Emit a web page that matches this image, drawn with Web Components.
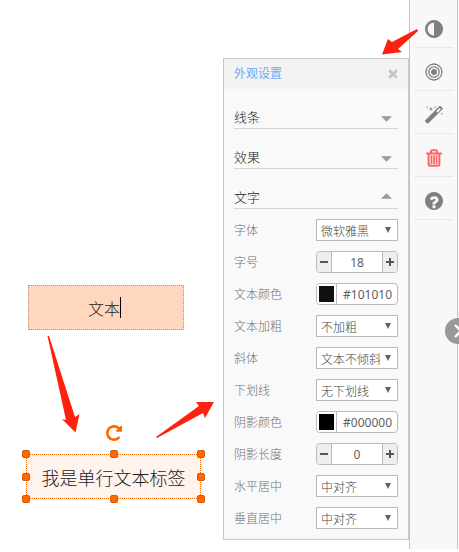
<!DOCTYPE html>
<html lang="zh-CN">
<head>
<meta charset="utf-8">
<meta name="viewport" content="width=device-width, initial-scale=1">
<title>外观设置</title>
<style>
  html, body { margin: 0; min-height: 100vh; background: #fff; }
  body { font-family: "Noto Sans", "Noto Sans CJK SC", sans-serif; font-size: 12px; font-weight: 300; overflow: hidden; }
</style>
</head>
<body>
<editor-app></editor-app>
<script>
const define = (name, html, setup) => customElements.define(name, class extends HTMLElement {
  connectedCallback() {
    if (this.shadowRoot) return;
    this.attachShadow({ mode: 'open' }).innerHTML = html;
    if (setup) setup(this, this.shadowRoot);
  }
});

const ICONS = {
  adjust: '<svg viewBox="0 0 1536 1536"><path d="M768 1312V224q-148 0-273 73T297 495t-73 273 73 273 198 198 273 73zm768-544q0 209-103 385.500T1153.500 1433 768 1536t-385.500-103T103 1153.500 0 768t103-385.500T382.500 103 768 0t385.500 103T1433 382.500 1536 768z"/></svg>',
  target: '<svg viewBox="0 0 18 18"><g fill="none" stroke="currentColor" stroke-width="1.3"><circle cx="9" cy="9" r="8"/><circle cx="9" cy="9" r="5.200"/></g><circle cx="9" cy="9" r="3"/></svg>',
  magic: '<svg viewBox="0 1 18 18"><path fill-rule="evenodd" d="M.3 15.300 14.200 1.300q.8-.8 1.600 0l1.500 1.500q.8.8 0 1.600L3.400 18.200q-.7.700-1.400 0L.3 16.700q-.7-.7 0-1.400zM11.300 6.200l1.400 1.400 3.200-3.300-1.400-1.400z"/><path d="M6 1.500 6.600 3.400 8.500 4 6.600 4.600 6 6.500 5.400 4.600 3.500 4 5.400 3.400zM2.200.8l.3 1 .9.300-.9.300-.3 1-.3-1-.9-.3.900-.3zM10 .8l.3 1 .9.300-.9.300-.3 1-.3-1-.9-.3.900-.3zM16.800 7.500l.3 1 .9.300-.9.300-.3 1-.3-1-.9-.3.900-.3z"/></svg>',
  trash: '<svg viewBox="0 0 18 18"><g fill="none" stroke="currentColor" stroke-width="2"><path d="M1.200 4.400h15.600M3.600 4.600v10.900q0 1.300 1.300 1.300h8.200q1.300 0 1.300-1.300V4.600M6 4.200V2.400q0-1.100 1.200-1.100h3.600q1.200 0 1.200 1.100v1.800"/><path stroke-width="1.700" d="M6.500 6.300v9M9 6.300v9M11.500 6.300v9"/></g></svg>',
  help: '<svg viewBox="0 0 1536 1536"><path d="M896 1344v-192q0-14-9-23t-23-9H672q-14 0-23 9t-9 23v192q0 14 9 23t23 9h192q14 0 23-9t9-23zm256-672q0-88-55.500-163T958 393t-170-41q-243 0-371 213-15 24 8 42l132 100q7 6 19 6 16 0 25-12 53-68 86-92 34-24 86-24 48 0 85.500 26t37.500 59q0 38-20 61t-68 45q-63 28-115.500 86.500T640 988v36q0 14 9 23t23 9h192q14 0 23-9t9-23q0-19 21.500-49.500T972 925q32-18 49-28.500t46-35 44.500-48 28-60.500 12.500-81zm384 96q0 209-103 385.500T1153.500 1433 768 1536t-385.500-103T103 1153.500 0 768t103-385.500T382.500 103 768 0t385.500 103T1433 382.500 1536 768z"/></svg>',
  repeat: '<svg viewBox="128 128 1536 1536"><path d="M1664 256v448q0 26-19 45t-45 19h-448q-42 0-59-40-17-39 14-69l138-138Q1097 384 896 384q-104 0-198.500 40.500T534 534 424.500 697.500 384 896t40.500 198.500T534 1258t163.500 109.500T896 1408q119 0 225-52t179-147q7-10 23-12 15 0 25 9l137 138q9 8 9.500 20.500t-7.500 22.500q-109 132-264 204.500T896 1664q-156 0-298-61t-245-164-164-245-61-298 61-298 164-245 245-164 298-61q147 0 284.500 55.500T1425 340l130-129q29-31 70-14 39 17 39 59z"/></svg>',
  close: '<svg viewBox="0 0 10 10"><path fill="none" stroke="currentColor" stroke-width="2.800" d="M1.200 1.200l7.600 7.600M8.800 1.200 1.200 8.800"/></svg>',
  minus: '<svg viewBox="0 0 8 8"><path d="M0 3h8v2H0z"/></svg>',
  plus: '<svg viewBox="0 0 8 8"><path d="M0 3h3V0h2v3h3v2H5v3H3V5H0z"/></svg>',
  down: '<svg viewBox="0 0 12 6"><path d="M0 0h12L6 6z"/></svg>',
  up: '<svg viewBox="0 0 12 6"><path d="M0 6h12L6 0z"/></svg>',
  caret: '<svg viewBox="0 0 6 6"><path d="M0 0h6L3 6z"/></svg>',
  chevron: '<svg viewBox="0 0 14 14"><path fill="none" stroke="currentColor" stroke-width="2.400" d="M4 1l6 6-6 6"/></svg>'
};

define('ui-icon', `<style>
  :host { display: block; flex: none; width: 18px; height: 18px; }
  svg { display: block; width: 100%; height: 100%; fill: currentColor; }
</style>`, (el, root) => root.innerHTML += ICONS[el.getAttribute('name')]);

define('tool-button', `<style>
  :host { display: block; border-bottom: 1px solid #e8e8e8; color: #808080; }
  :host([danger]) { color: #ff6464; }
  button { display: flex; width: 100%; height: 42px; padding: 6px 0 0; border: 0; background: none; color: inherit; align-items: center; justify-content: center; }
</style><button><ui-icon></ui-icon></button>`, (el, root) => {
  const icon = document.createElement('ui-icon');
  icon.setAttribute('name', el.getAttribute('icon'));
  root.querySelector('ui-icon').replaceWith(icon);
  root.querySelector('button').setAttribute('aria-label', el.getAttribute('label'));
});

define('tool-rail', `<style>
  :host { display: block; box-sizing: border-box; width: 49px; padding: 5px 4px; border: solid #c4c4c4; border-width: 0 1px; background: #f8f8f8; }
</style><slot></slot>`);

define('panel-section', `<style>
  :host { display: block; border-bottom: 1px solid #d4d4d4; color: #222; font-size: 13px; line-height: 20px; }
  button { display: flex; width: 100%; padding: 18px 6px 1px 0; border: 0; background: none; color: inherit; font: inherit; text-align: left; align-items: center; justify-content: space-between; }
  ui-icon { width: 11px; height: 6px; margin-top: 4px; color: #999; }
  :host([open]) ui-icon { margin-top: 0; margin-bottom: 2px; }
</style><button><slot></slot></button>`, (el, root) => {
  const icon = document.createElement('ui-icon');
  icon.setAttribute('name', el.hasAttribute('open') ? 'up' : 'down');
  root.querySelector('button').append(icon);
});

const FIELD = `
  :host { display: flex; height: 22px; align-items: center; color: #707070; }
  label { flex: 1; padding-top: 2px; line-height: 20px; }
  .box { display: flex; box-sizing: border-box; position: relative; flex: none; width: 82px; height: 22px; border: 1px solid #bbb; background: #fff; color: #606060; align-items: stretch; }
  .round { border-radius: 4px; overflow: hidden; }
  input, select { box-sizing: border-box; min-width: 0; border: 0; margin: 0; padding: 0; background: none; color: inherit; font: inherit; outline: 0; }`;

define('select-field', `<style>${FIELD}
  select { appearance: none; width: 100%; padding: 2px 17px 0 4px; color: #444; text-overflow: clip; }
  ui-icon { position: absolute; right: 6px; top: 7px; width: 6px; height: 6px; pointer-events: none; }
</style><label for="f"></label><div class="box"><select id="f"><option></option></select><ui-icon name="caret"></ui-icon></div>`, (el, root) => {
  root.querySelector('label').textContent = el.getAttribute('label');
  root.querySelector('option').textContent = el.getAttribute('value');
});

define('number-field', `<style>${FIELD}
  input { flex: 1; border: solid #bbb; border-width: 0 1px; text-align: center; font-weight: 400; }
  button { display: flex; width: 14px; padding: 0; border: 0; background: #eee; color: #555; align-items: center; justify-content: center; }
  ui-icon { width: 8px; height: 8px; }
</style><label for="f"></label><div class="box round"><button aria-label="减小"><ui-icon name="minus"></ui-icon></button><input id="f" inputmode="numeric"><button aria-label="增大"><ui-icon name="plus"></ui-icon></button></div>`, (el, root) => {
  root.querySelector('label').textContent = el.getAttribute('label');
  root.querySelector('input').value = el.getAttribute('value');
});

define('color-field', `<style>${FIELD}
  button { width: 20px; flex: none; padding: 2px; border: 0; border-right: 1px solid #bbb; background: #fff; }
  i { display: block; height: 16px; }
  input { flex: 1; padding-right: 5px; text-align: right; font-weight: 400; }
</style><label for="f"></label><div class="box round"><button aria-label="选择颜色"><i></i></button><input id="f"></div>`, (el, root) => {
  root.querySelector('label').textContent = el.getAttribute('label');
  root.querySelector('input').value = el.getAttribute('value');
  root.querySelector('i').style.background = el.getAttribute('value');
});

define('settings-panel', `<style>
  :host { display: block; box-sizing: border-box; width: 186px; border: 1px solid #c8c8c8; background: #f9f9f9; }
  header { display: flex; height: 30px; padding: 0 10px; background: #f3f3f3; align-items: center; justify-content: space-between; }
  h2 { margin: 0; color: #6caaf5; font-size: 12px; font-weight: 400; line-height: 20px; }
  header button { padding: 0; border: 0; background: none; color: #c4c4c4; }
  header ui-icon { width: 10px; height: 10px; }
  .sections { padding: 0 10px; }
  .fields { display: grid; gap: 10px; padding: 10px; }
</style>
<header><h2><slot name="title"></slot></h2><button aria-label="关闭"><ui-icon name="close"></ui-icon></button></header>
<div class="sections"><slot name="section"></slot></div>
<div class="fields"><slot></slot></div>`);

define('edit-shape', `<style>
  :host { display: flex; box-sizing: border-box; height: 45px; padding-right: 4px; border: 1px dotted #ff7a1a; background: #ffd7bf; color: #222; font-size: 16px; align-items: center; justify-content: center; }
  i { width: 1px; height: 21px; margin-right: -1px; background: #000; }
</style><slot></slot><i></i>`);

define('selected-shape', `<style>
  :host { display: flex; box-sizing: border-box; height: 45px; outline: 1px dotted #ff6a00; outline-offset: -1px; background: #fff3ee; color: #222; font-size: 18px; align-items: center; justify-content: center; }
  b { position: absolute; box-sizing: border-box; width: 8px; height: 8px; margin: -4px; border: 1px solid #d95700; border-radius: 2px; background: #ff6a00; }
  button { position: absolute; left: 50%; top: -29px; margin-left: -8px; padding: 0; border: 0; background: none; color: #ff6a00; }
  button ui-icon { width: 16px; height: 16px; }
</style><slot></slot><button aria-label="旋转"><ui-icon name="repeat"></ui-icon></button>`, (el, root) => {
  for (const y of [0, 50, 100]) for (const x of [0, 50, 100]) {
    if (x === 50 && y === 50) continue;
    const b = document.createElement('b');
    b.style.left = x + '%';
    b.style.top = y + '%';
    root.append(b);
  }
});

define('editor-app', `<style>
  :host { display: flex; box-sizing: border-box; position: relative; min-height: 100vh; padding-bottom: 3px; align-items: stretch; }
  main { flex: 1; position: relative; min-width: 0; }
  edit-shape { position: absolute; left: 28px; top: 285px; width: 156px; }
  selected-shape { position: absolute; left: 26px; top: 454px; width: 175px; }
  settings-panel { align-self: flex-start; margin-top: 58px; }
  .edge { width: 1px; background: #f8f8f8; }
  .drawer { position: absolute; right: -12px; top: 318px; display: flex; width: 26px; height: 26px; padding: 0; border: 0; border-radius: 50%; background: #999; color: #fff; align-items: center; justify-content: center; }
  .drawer ui-icon { width: 14px; height: 14px; }
  .arrows { position: absolute; left: 0; top: 0; width: 459px; height: 552px; pointer-events: none; fill: #ff2010; }
</style>
<main><edit-shape>文本</edit-shape><selected-shape>我是单行文本标签</selected-shape></main>
<settings-panel>
  <span slot="title">外观设置</span>
  <panel-section slot="section">线条</panel-section>
  <panel-section slot="section">效果</panel-section>
  <panel-section slot="section" open>文字</panel-section>
  <select-field label="字体" value="微软雅黑"></select-field>
  <number-field label="字号" value="18"></number-field>
  <color-field label="文本颜色" value="#101010"></color-field>
  <select-field label="文本加粗" value="不加粗"></select-field>
  <select-field label="斜体" value="文本不倾斜"></select-field>
  <select-field label="下划线" value="无下划线"></select-field>
  <color-field label="阴影颜色" value="#000000"></color-field>
  <number-field label="阴影长度" value="0"></number-field>
  <select-field label="水平居中" value="中对齐"></select-field>
  <select-field label="垂直居中" value="中对齐"></select-field>
</settings-panel>
<tool-rail>
  <tool-button icon="adjust" label="外观"></tool-button>
  <tool-button icon="target" label="事件"></tool-button>
  <tool-button icon="magic" label="动画"></tool-button>
  <tool-button icon="trash" label="删除" danger></tool-button>
  <tool-button icon="help" label="帮助"></tool-button>
</tool-rail>
<div class="edge"></div>
<button class="drawer" aria-label="收起"><ui-icon name="chevron"></ui-icon></button>
<svg class="arrows" viewBox="0 0 459 552" aria-hidden="true">
  <path d="M417 29 392 42 388 39 382 54.500 402 52 398 49 418 31z"/>
  <path d="M47.500 336 66 420 62 419 75.500 432.500 79.500 414 75 417 49 336z"/>
  <path d="M156 437 199 406 196 402 214 402 205 418 203 413 157 438z"/>
</svg>`);
</script>
</body>
</html>
